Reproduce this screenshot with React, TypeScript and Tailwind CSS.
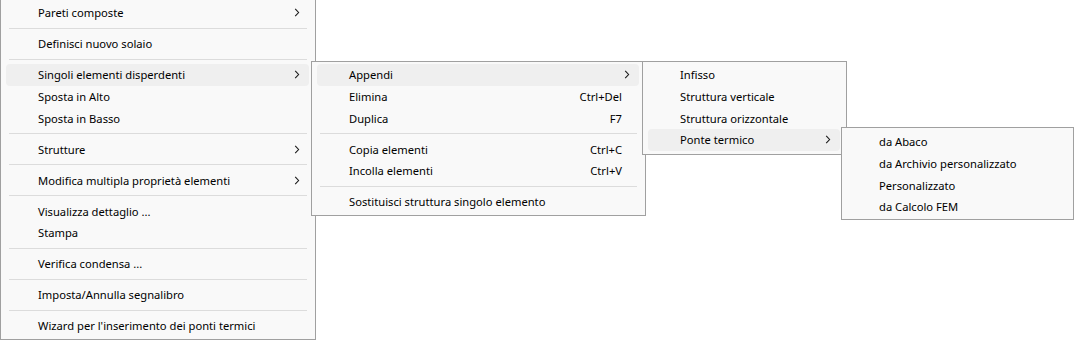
import React from 'react';

type Item =
  | { kind: 'sep' }
  | { kind: 'item'; label: string; shortcut?: string; sub?: boolean; active?: boolean };

const sep: Item = { kind: 'sep' };
const it = (label: string, extra: Partial<{ shortcut: string; sub: boolean; active: boolean }> = {}): Item => ({
  kind: 'item',
  label,
  ...extra,
});

const mainItems: Item[] = [
  it('Pareti composte', { sub: true }),
  sep,
  it('Definisci nuovo solaio'),
  sep,
  it('Singoli elementi disperdenti', { sub: true, active: true }),
  it('Sposta in Alto'),
  it('Sposta in Basso'),
  sep,
  it('Strutture', { sub: true }),
  sep,
  it('Modifica multipla proprietà elementi', { sub: true }),
  sep,
  it('Visualizza dettaglio ...'),
  it('Stampa'),
  sep,
  it('Verifica condensa ...'),
  sep,
  it('Imposta/Annulla segnalibro'),
  sep,
  it("Wizard per l'inserimento dei ponti termici"),
];

const elementItems: Item[] = [
  it('Appendi', { sub: true, active: true }),
  it('Elimina', { shortcut: 'Ctrl+Del' }),
  it('Duplica', { shortcut: 'F7' }),
  sep,
  it('Copia elementi', { shortcut: 'Ctrl+C' }),
  it('Incolla elementi', { shortcut: 'Ctrl+V' }),
  sep,
  it('Sostituisci struttura singolo elemento'),
];

const appendItems: Item[] = [
  it('Infisso'),
  it('Struttura verticale'),
  it('Struttura orizzontale'),
  it('Ponte termico', { sub: true, active: true }),
];

const ponteItems: Item[] = [
  it('da Abaco'),
  it('da Archivio personalizzato'),
  it('Personalizzato'),
  it('da Calcolo FEM'),
];

const Chevron = () => (
  <svg width="6" height="9" viewBox="0 0 6 9" className="shrink-0 -mt-[2px]">
    <path d="M1.2 0.8 L4.6 4.5 L1.2 8.2" fill="none" stroke="#1b1b1b" strokeWidth="1.1" />
  </svg>
);

const MenuList: React.FC<{ items: Item[] }> = ({ items }) => (
  <>
    {items.map((item, i) =>
      item.kind === 'sep' ? (
        <div key={i} className="h-[9.33px] flex items-center px-[8px]">
          <div className="h-px w-full bg-[#dcdcdc]" />
        </div>
      ) : (
        <div
          key={i}
          className={`h-[21.67px] ml-[5px] mr-[6px] pl-[32px] pr-[9px] pt-[2px] flex items-center rounded-[4px] ${
            item.active ? 'bg-[#efefef]' : ''
          }`}
        >
          <span className="flex-1 whitespace-nowrap">{item.label}</span>
          {item.shortcut && <span className="whitespace-nowrap mr-[8px]">{item.shortcut}</span>}
          {item.sub && <Chevron />}
        </div>
      )
    )}
  </>
);

export default function App() {
  return (
    <div
      className="relative w-[1077px] h-[341px] overflow-hidden bg-white text-[11.2px] text-black"
      style={{ fontFamily: '"Noto Sans", "Open Sans", sans-serif' }}
    >
      <div className="w-[316px] bg-[#f9f9f9] border-x border-b border-[#a0a0a0] pt-[2px] pb-[2px]">
        <MenuList items={mainItems} />
      </div>

      <div className="absolute left-[311px] top-[61px] w-[335px] bg-[#f9f9f9] border border-[#a0a0a0] pt-[2px] pb-[2px]">
        <MenuList items={elementItems} />
      </div>

      <div className="absolute left-[642px] top-[61px] w-[205px] bg-[#f9f9f9] border border-[#a0a0a0] pt-[2px] pb-[3px]">
        <MenuList items={appendItems} />
      </div>

      <div className="absolute left-[841px] top-[127px] w-[233px] bg-[#f9f9f9] border border-[#a0a0a0] pt-[3px] pb-[1px]">
        <MenuList items={ponteItems} />
      </div>
    </div>
  );
}
